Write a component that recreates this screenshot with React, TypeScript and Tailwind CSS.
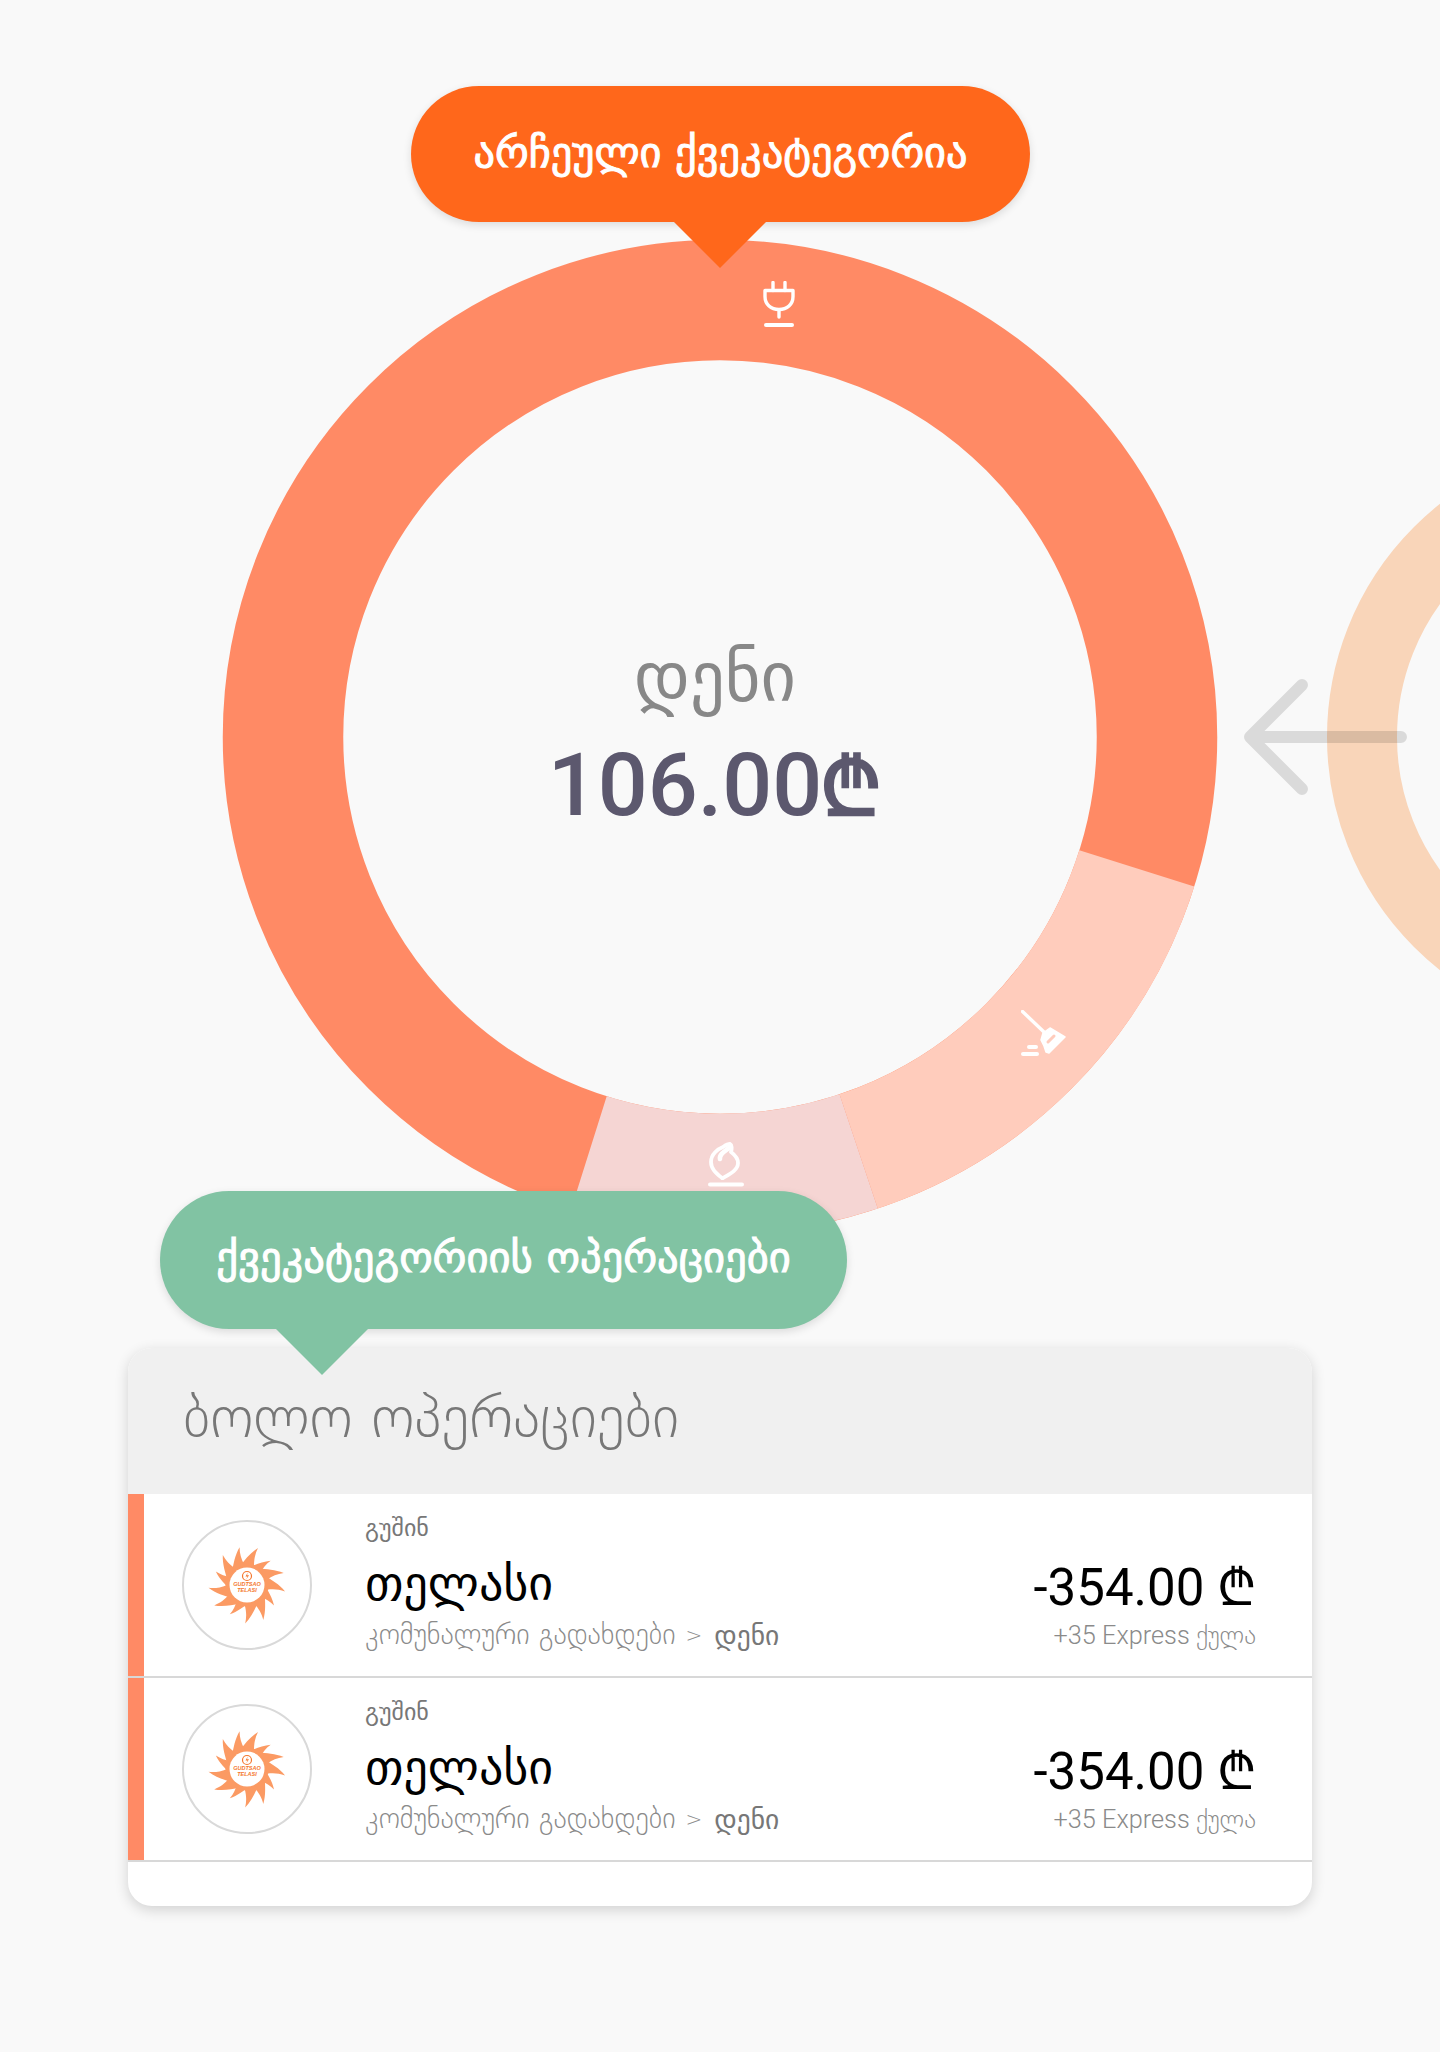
const CX = 498;
const CY = 498;
const R = 437;

function arc(from: number, to: number) {
  const pt = (deg: number) => {
    const a = ((deg - 90) * Math.PI) / 180;
    return `${CX + R * Math.cos(a)} ${CY + R * Math.sin(a)}`;
  };
  const large = to - from > 180 ? 1 : 0;
  return `M ${pt(from)} A ${R} ${R} 0 ${large} 1 ${pt(to)}`;
}

function PlugIcon() {
  return (
    <svg width="32" height="46" viewBox="0 0 32 46" fill="none" stroke="#fff" strokeWidth="3.4" strokeLinecap="round" strokeLinejoin="round">
      <path d="M10 1.5v8M22 1.5v8" />
      <path d="M2 9.5h28v6c0 8-6 13-14 13s-14-5-14-13z" />
      <path d="M16 29v7" />
      <path d="M3 44h26" strokeWidth="4" />
    </svg>
  );
}

function BroomIcon() {
  return (
    <svg width="46" height="46" viewBox="0 0 46 46" fill="#fff" stroke="#fff" strokeLinecap="round" strokeLinejoin="round">
      <path d="M1.5 1.5l22 21" fill="none" strokeWidth="3.4" />
      <path d="M20 30l2-7 7-5 15 9-16 16-3-1-2-6z" strokeWidth="1.5" />
      <path d="M27 32l6-6" stroke="#ffccbc" strokeWidth="3" fill="none" />
      <path d="M8 37h7" fill="none" strokeWidth="4" />
      <path d="M2 44h14" fill="none" strokeWidth="4" />
    </svg>
  );
}

function FlameIcon() {
  return (
    <svg width="36" height="46" viewBox="0 0 36 46" fill="none" stroke="#fff" strokeLinecap="round" strokeLinejoin="round">
      <path
        d="M14 37C8 32 3 28 3 21 3 13 10 8 15 6 18 4 20 3 22 3 24 4 24 8 23 11 27 14 30 17 30 22 30 29 22 33 15 37"
        strokeWidth="3.8"
      />
      <path d="M12 18C11 13 17 10 21 7" strokeWidth="4.600" />
      <path d="M2 43.500h32" strokeWidth="4" />
    </svg>
  );
}

// curled rays round a white disc, long and short in turn
function TelasiLogo() {
  const rays = Array.from({ length: 13 }, (_, i) => (i * 360) / 13);
  return (
    <svg width="78" height="78" viewBox="-39 -39 78 78">
      <circle r="21.500" fill="#fb9a63" />
      <g fill="#fb9a63">
        {rays.map((deg, i) => (
          <path
            key={deg}
            transform={`rotate(${deg}) scale(${i % 3 === 1 ? 0.88 : 1})`}
            d="M-7 -19 C-2 -25 3 -32 11 -37 C8 -31 7 -26 7 -19 Z"
          />
        ))}
      </g>
      <circle r="17.500" fill="#fff" />
      <circle cy="-9" r="4.500" fill="none" stroke="#f4772e" strokeWidth="1.200" />
      <path d="M0.800 -12.500 L-1.500 -8.500 H0.500 L-0.800 -5.500 L2 -9.800 H0 Z" fill="#f4772e" />
      <text x="0" y="1" textAnchor="middle" fontSize="5.500" fontStyle="italic" fontWeight="700" fill="#f4772e" className="font-['Liberation_Sans',sans-serif]">
        GUDTSAO
      </text>
      <text x="0" y="7" textAnchor="middle" fontSize="5.500" fontStyle="italic" fontWeight="700" fill="#f4772e" className="font-['Liberation_Sans',sans-serif]">
        TELASI
      </text>
    </svg>
  );
}

function OperationRow() {
  return (
    <div className="flex h-[184px] border-b-2 border-[#d8d8d8]">
      <div className="w-[16px] shrink-0 bg-[#ff8a65]" />
      <div className="flex flex-1 items-center pl-[38px] pr-[56px]">
        <div className="flex h-[130px] w-[130px] shrink-0 items-center justify-center rounded-full border-2 border-[#d9d9d9]">
          <TelasiLogo />
        </div>
        <div className="ml-[53px] flex flex-col pb-[4px]">
          <span className="text-[24px] leading-[28px] text-[#777]">გუშინ</span>
          <span className="mt-[12px] text-[48px] leading-[58px] text-black">თელასი</span>
          <span className="mt-[6px] flex items-center gap-[10px] text-[28.5px] font-light leading-[34px] text-[#8a8a8a]">
            კომუნალური გადახდები
            <span className="text-[20px]">&gt;</span>
            <span className="ml-[2px] text-[27.5px] font-normal text-[#777]">დენი</span>
          </span>
        </div>
        <div className="ml-auto flex flex-col items-end pt-[38px]">
          <span className="font-['Roboto','DejaVu_Sans',sans-serif] text-[51px] leading-[60px] text-black">
            -354.00 <span className="font-medium">₾</span>
          </span>
          <span className="mt-[3px] font-['Roboto','DejaVu_Sans',sans-serif] text-[25.3px] font-light leading-[30px] text-[#8a8a8a]">
            +35 Express ქულა
          </span>
        </div>
      </div>
    </div>
  );
}

export default function App() {
  return (
    <div className="relative h-[2052px] w-full overflow-hidden bg-[#f9f9f9] font-['DejaVu_Sans',sans-serif]">
      {/* next chart peeking in from the right */}
      <div className="absolute left-[1327px] top-[440px] h-[594px] w-[594px] rounded-full border-[70px] border-[#f9d5b9]" />

      <div className="flex justify-center pt-[239px]">
        <div className="relative h-[996px] w-[996px]">
          <svg width="996" height="996" viewBox="0 0 996 996" fill="none" strokeWidth="120.500">
            <circle cx={CX} cy={CY} r={R} stroke="#ff8a65" />
            <path d={arc(107.5, 161.5)} stroke="#ffccbc" />
            <path d={arc(161.5, 197.5)} stroke="#f5d5d3" />
          </svg>
          <div className="absolute left-[541px] top-[42px]">
            <PlugIcon />
          </div>
          <div className="absolute left-[799px] top-[771px]">
            <BroomIcon />
          </div>
          <div className="absolute left-[486px] top-[902px]">
            <FlameIcon />
          </div>
          <div className="absolute inset-0 flex flex-col items-center justify-center">
            <span className="-ml-[10px] text-[68.5px] leading-[80px] text-[#888]">დენი</span>
            <span className="-ml-[10px] mt-[18px] font-['Roboto','DejaVu_Sans',sans-serif] text-[88px] font-medium leading-[100px] text-[#5c586e]">
              106.00<span className="-ml-[2px] text-[80px] font-bold">₾</span>
            </span>
          </div>
        </div>
      </div>

      <svg className="absolute left-[1244px] top-[676px]" width="170" height="124" viewBox="0 0 170 124" fill="none" stroke="#000" strokeOpacity="0.12" strokeWidth="12" strokeLinecap="round" strokeLinejoin="round">
        <path d="M58 9 L6 61 L58 113 M6 61 H157" />
      </svg>

      {/* selected category bubble */}
      <div className="absolute left-[411px] top-[86px] flex h-[136px] w-[619px] items-center justify-center rounded-[68px] bg-[#ff671b] pb-[2px] shadow-[0_3px_8px_rgba(0,0,0,0.12)]">
        <span className="text-[42.4px] text-white [-webkit-text-stroke:1px_white]">არჩეული ქვეკატეგორია</span>
        <div className="absolute left-[263px] top-[136px] h-[46px] w-[92px] bg-[#ff671b] [clip-path:polygon(0_0,100%_0,50%_100%)]" />
      </div>

      <div className="mx-auto mt-[113px] w-[1184px] overflow-hidden rounded-[24px] bg-white shadow-[0_4px_14px_rgba(0,0,0,0.16)]">
        <div className="flex h-[146px] items-center bg-[#f0f0f0] pb-[8px] pl-[55px]">
          <span className="text-[58px] font-extralight leading-none text-[#777]">ბოლო ოპერაციები</span>
        </div>
        <OperationRow />
        <OperationRow />
        <div className="h-[44px]" />
      </div>

      {/* operations bubble */}
      <div className="absolute left-[160px] top-[1191px] flex h-[138px] w-[687px] items-center justify-center rounded-[69px] bg-[#81c3a3] pb-[4px] shadow-[0_3px_8px_rgba(0,0,0,0.12)]">
        <span className="text-[42.6px] text-white [-webkit-text-stroke:1px_white]">ქვეკატეგორიის ოპერაციები</span>
        <div className="absolute left-[116px] top-[138px] h-[46px] w-[92px] bg-[#81c3a3] [clip-path:polygon(0_0,100%_0,50%_100%)]" />
      </div>
    </div>
  );
}
